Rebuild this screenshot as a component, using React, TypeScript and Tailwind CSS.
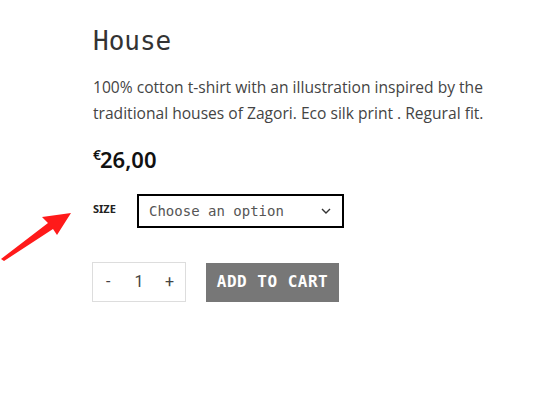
import React from "react";

export default function App() {
  return (
    <div className="relative w-[553px] h-[416px] bg-white overflow-hidden">
      <svg className="absolute left-0 top-0" width="90" height="280" viewBox="0 0 90 280">
        <polygon points="1,259 48,223 42,217 71,213 57,235 53,229 4,261" fill="#ff1a1a" />
      </svg>
      <div className="pl-[93px] pt-[24px] flex flex-col">
        <h1 className="text-[26px] leading-[34px] text-[#333] tracking-[0px]" style={{ fontFamily: '"DejaVu Sans Mono", monospace' }}>
          House
        </h1>
        <p className="mt-[16px] text-[15.6px] leading-[26px] text-[#444] w-[430px]" style={{ fontFamily: '"Open Sans", sans-serif' }}>
          100% cotton t-shirt with an illustration inspired by the traditional houses of Zagori. Eco silk print . Regural fit.
        </p>
        <div className="mt-[20px] flex items-start text-[#111] font-semibold" style={{ fontFamily: '"Noto Sans", sans-serif' }}>
          <span className="text-[14px] leading-[18px]">€</span>
          <span className="text-[22px] leading-[26px] -ml-[1px]">26,00</span>
        </div>
        <div className="mt-[22px] flex items-start">
          <span className="text-[11px] font-bold text-[#222] mt-[7px] w-[44px]" style={{ fontFamily: '"Noto Sans", sans-serif' }}>SIZE</span>
          <div className="w-[207px] h-[34px] border-2 border-black flex items-center justify-between pl-[10px] pr-[10px]">
            <span className="text-[14px] text-[#555]" style={{ fontFamily: '"DejaVu Sans Mono", monospace' }}>Choose an option</span>
            <svg width="12" height="8" viewBox="0 0 12 8">
              <path d="M2 2 L6 6 L10 2" fill="none" stroke="#333" strokeWidth="1.4" />
            </svg>
          </div>
        </div>
        <div className="mt-[34px] flex items-center">
          <div className="-ml-[1px] w-[94px] h-[40px] border border-[#ddd] grid grid-cols-3 items-center text-center text-[16px] text-[#444]" style={{ fontFamily: '"Roboto", sans-serif' }}>
            <span>-</span>
            <span>1</span>
            <span>+</span>
          </div>
          <div className="ml-[20px] w-[133px] h-[39px] bg-[#777] text-white flex items-center justify-center text-[16px] font-bold tracking-[0.5px]" style={{ fontFamily: '"DejaVu Sans Mono", monospace' }}>
            ADD TO CART
          </div>
        </div>
      </div>
    </div>
  );
}
